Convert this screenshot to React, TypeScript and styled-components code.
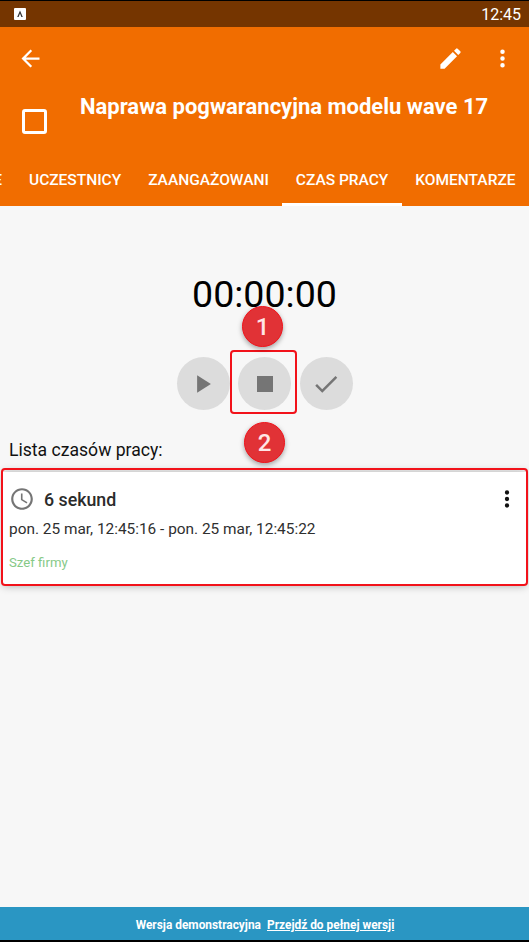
import * as React from "react";
import styled, { createGlobalStyle } from "styled-components";

const GlobalStyle = createGlobalStyle`
  html, body {
    margin: 0;
    padding: 0;
    background: #000;
  }
  body {
    font-family: Roboto, "Liberation Sans", sans-serif;
  }
  * {
    box-sizing: border-box;
  }
`;

const Screen = styled.div`
  position: relative;
  width: 529px;
  height: 942px;
  padding: 1px 0 2px;
  display: flex;
  flex-direction: column;
  overflow: hidden;
  background: #000;
`;

const StatusBar = styled.div`
  height: 26px;
  flex: none;
  padding: 0 8px 0 14px;
  display: flex;
  align-items: center;
  justify-content: space-between;
  background: #753500;
  color: #fff;
  font-size: 16px;
`;

const AppBar = styled.header`
  height: 179px;
  flex: none;
  display: flex;
  flex-direction: column;
  background: #f16d00;
  color: #fff;
`;

const Toolbar = styled.div`
  height: 60px;
  padding: 3px 13px 0 17px;
  display: flex;
  align-items: center;
  justify-content: space-between;
`;

const ToolbarActions = styled.div`
  display: flex;
  align-items: center;
  gap: 25px;
`;

const TitleRow = styled.div`
  height: 64px;
  padding: 0 0 0 22px;
  display: flex;
  align-items: flex-start;
`;

const CheckBox = styled.div`
  width: 25px;
  height: 25px;
  margin-top: 22px;
  flex: none;
  border: 3px solid #fff;
  border-radius: 3px;
`;

const Title = styled.h1`
  margin: 5px 0 0 33px;
  font-size: 22px;
  line-height: 30px;
  font-weight: 700;
  white-space: nowrap;
`;

const Tabs = styled.nav`
  height: 55px;
  display: flex;
  justify-content: flex-end;
  align-items: stretch;
`;

const Tab = styled.div<{ $active?: boolean }>`
  flex: none;
  padding: 5px 13.5px 0;
  display: flex;
  align-items: center;
  height: 55px;
  border-bottom: 3px solid ${p => (p.$active ? "#fff" : "transparent")};
  font-size: 15.5px;
  font-weight: 500;
  white-space: nowrap;
`;

const Content = styled.main`
  flex: 1;
  display: flex;
  flex-direction: column;
  background: #f7f7f7;
`;

const Timer = styled.div`
  margin-top: 65px;
  text-align: center;
  font-size: 37.6px;
  line-height: 46px;
  color: #000;
`;

const Controls = styled.div`
  margin-top: 40px;
  display: flex;
  justify-content: center;
  gap: 8.5px;
`;

const RoundButton = styled.button`
  width: 53px;
  height: 53px;
  padding: 0;
  border: 0;
  border-radius: 50%;
  display: flex;
  align-items: center;
  justify-content: center;
  background: #dcdcdc;
`;

const ListLabel = styled.div`
  margin: 28px 0 0 9px;
  font-size: 17.6px;
  line-height: 24px;
  color: #111;
`;

const Card = styled.section`
  position: relative;
  margin: 10px 3px 0;
  height: 114px;
  padding: 13px 6px 0;
  background: #fff;
  box-shadow: 0 0 8px rgba(0, 0, 0, 0.3);
`;

const CardHead = styled.div`
  display: flex;
  align-items: center;
  height: 28px;
`;

const CardTitle = styled.div`
  margin-left: 9px;
  font-size: 17.8px;
  font-weight: 500;
  color: #2b2b2b;
`;

const CardMenu = styled.div`
  margin-left: auto;
  display: flex;
`;

const CardRange = styled.div`
  margin-top: 5px;
  font-size: 15.4px;
  line-height: 22px;
  color: #2f2f2f;
`;

const CardOwner = styled.div`
  margin-top: 14px;
  font-size: 13.2px;
  line-height: 18px;
  color: #86c987;
`;

const Banner = styled.footer`
  height: 33px;
  flex: none;
  display: flex;
  align-items: center;
  justify-content: center;
  gap: 6px;
  padding: 2px 0 0 1px;
  background: #2a96c3;
  color: #fff;
  font-size: 11.9px;
  font-weight: 700;
`;

const BannerLink = styled.span`
  text-decoration: underline;
`;

const Outline = styled.div<{ $l: number; $t: number; $w: number; $h: number }>`
  position: absolute;
  left: ${p => p.$l}px;
  top: ${p => p.$t}px;
  width: ${p => p.$w}px;
  height: ${p => p.$h}px;
  border: 2px solid #f2121a;
  border-radius: 4px;
`;

const Badge = styled.div<{ $l: number; $t: number }>`
  position: absolute;
  left: ${p => p.$l}px;
  top: ${p => p.$t}px;
  width: 41px;
  height: 41px;
  display: flex;
  align-items: center;
  justify-content: center;
  border: 1.5px solid #f2121a;
  border-radius: 50%;
  background: #e13236;
  box-shadow: 0 2px 5px rgba(0, 0, 0, 0.35);
  color: #ffe6e6;
  font-size: 24px;
  font-weight: 500;
`;

export default function App() {
  return (
    <Screen>
      <GlobalStyle />
      <StatusBar>
        <svg width="12" height="12" viewBox="0 0 12 12">
          <rect width="12" height="12" rx="1" fill="#fff" />
          <path d="M3.2 9 6 2.5 8.800 9H7.400L6 5.500 4.600 9Z" fill="#333" />
        </svg>
        <span>12:45</span>
      </StatusBar>
      <AppBar>
        <Toolbar>
          <svg width="27" height="27" viewBox="0 0 24 24" fill="#fff">
            <path d="M20 11H7.830l5.590-5.590L12 4l-8 8 8 8 1.410-1.410L7.830 13H20z" />
          </svg>
          <ToolbarActions>
            <svg width="27" height="27" viewBox="0 0 24 24" fill="#fff">
              <path d="M3 17.250V21h3.750L17.810 9.940l-3.750-3.750L3 17.250zM20.710 7.040a1 1 0 0 0 0-1.410l-2.340-2.340a1 1 0 0 0-1.410 0l-1.830 1.830 3.750 3.750 1.830-1.830z" />
            </svg>
            <svg width="27" height="27" viewBox="0 0 24 24" fill="#fff">
              <path d="M12 8a2 2 0 1 0 0-4 2 2 0 0 0 0 4zm0 2a2 2 0 1 0 0 4 2 2 0 0 0 0-4zm0 6a2 2 0 1 0 0 4 2 2 0 0 0 0-4z" />
            </svg>
          </ToolbarActions>
        </Toolbar>
        <TitleRow>
          <CheckBox />
          <Title>Naprawa pogwarancyjna modelu wave 17</Title>
        </TitleRow>
        <Tabs>
          <Tab>PRACE</Tab>
          <Tab>UCZESTNICY</Tab>
          <Tab>ZAANGAŻOWANI</Tab>
          <Tab $active>CZAS PRACY</Tab>
          <Tab>KOMENTARZE</Tab>
        </Tabs>
      </AppBar>
      <Content>
        <Timer>00:00:00</Timer>
        <Controls>
          <RoundButton>
            <svg width="30" height="30" viewBox="0 0 24 24" fill="#757575">
              <path d="M7.300 5v14l11-7z" />
            </svg>
          </RoundButton>
          <RoundButton>
            <svg width="30" height="30" viewBox="0 0 24 24" fill="#757575">
              <path d="M5.600 5.600h12.800v12.800H5.600z" />
            </svg>
          </RoundButton>
          <RoundButton>
            <svg width="30" height="30" viewBox="0 0 24 24" fill="#757575">
              <path d="M9 16.200 4.800 12l-1.400 1.400L9 19 21 7l-1.400-1.400z" />
            </svg>
          </RoundButton>
        </Controls>
        <ListLabel>Lista czasów pracy:</ListLabel>
        <Card>
          <CardHead>
            <svg width="26" height="26" viewBox="0 0 24 24" fill="#757575">
              <path d="M11.990 2C6.470 2 2 6.480 2 12s4.470 10 9.990 10C17.520 22 22 17.520 22 12S17.520 2 11.990 2zM12 20c-4.420 0-8-3.580-8-8s3.580-8 8-8 8 3.580 8 8-3.580 8-8 8zm.5-13H11v6l5.250 3.150.75-1.230-4.500-2.670z" />
            </svg>
            <CardTitle>6 sekund</CardTitle>
            <CardMenu>
              <svg width="26" height="26" viewBox="0 0 24 24" fill="#111">
                <path d="M12 8a2 2 0 1 0 0-4 2 2 0 0 0 0 4zm0 2a2 2 0 1 0 0 4 2 2 0 0 0 0-4zm0 6a2 2 0 1 0 0 4 2 2 0 0 0 0-4z" />
              </svg>
            </CardMenu>
          </CardHead>
          <CardRange>pon. 25 mar, 12:45:16 - pon. 25 mar, 12:45:22</CardRange>
          <CardOwner>Szef firmy</CardOwner>
        </Card>
      </Content>
      <Banner>
        <span>Wersja demonstracyjna</span>
        <BannerLink>Przejdź do pełnej wersji</BannerLink>
      </Banner>
      <Outline $l={230} $t={350} $w={67} $h={64} />
      <Outline $l={1} $t={468} $w={527} $h={118} />
      <Badge $l={242} $t={306}>1</Badge>
      <Badge $l={244} $t={422}>2</Badge>
    </Screen>
  );
}
